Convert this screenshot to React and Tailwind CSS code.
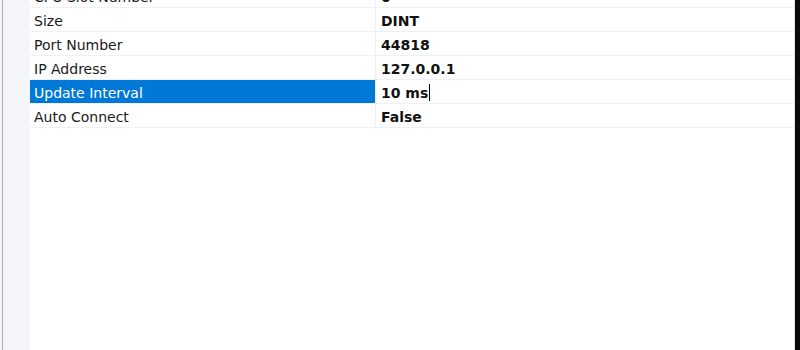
import React from "react";

const rows = [
  ["CPU Slot Number", "0"],
  ["Size", "DINT"],
  ["Port Number", "44818"],
  ["IP Address", "127.0.0.1"],
  ["Update Interval", "10 ms", true],
  ["Auto Connect", "False"],
];

export default function App() {
  return (
    <div className="w-[800px] h-[350px] flex bg-white overflow-hidden" style={{ fontFamily: "Tahoma, 'DejaVu Sans', sans-serif" }}>
      <div className="w-[2px] bg-[#f4f4f4]" />
      <div className="w-[1px] bg-[#a9afb8]" />
      <div className="flex-1 flex bg-white">
        <div className="w-[27px] bg-[#f4f6f9]" />
        <div className="flex-1 flex flex-col -mt-[16px]">
          {rows.map(([k, v, sel], i) => (
            <div key={i} className="flex h-6 border-b border-[#eef0f3]">
              <div className={`w-[345px] flex items-center pl-[4px] pt-[2px] text-[14px] leading-[18px] ${sel ? "bg-[#0078d7] text-white" : "text-[#1a1a1a]"}`}>
                {k}
              </div>
              <div className="w-[1px] bg-[#eef0f3]" />
              <div className="flex-1 flex items-center pl-[5px] pt-[2px] text-[14px] leading-[18px] font-bold text-[#111]">
                {v}
                {sel && <span className="ml-[1px] w-[1px] h-[17px] bg-black" />}
              </div>
            </div>
          ))}
        </div>
        <div className="w-[1px] bg-[#e3e3e3]" />
      </div>
      <div className="w-[5px] bg-[#0a0a0a]" />
    </div>
  );
}
